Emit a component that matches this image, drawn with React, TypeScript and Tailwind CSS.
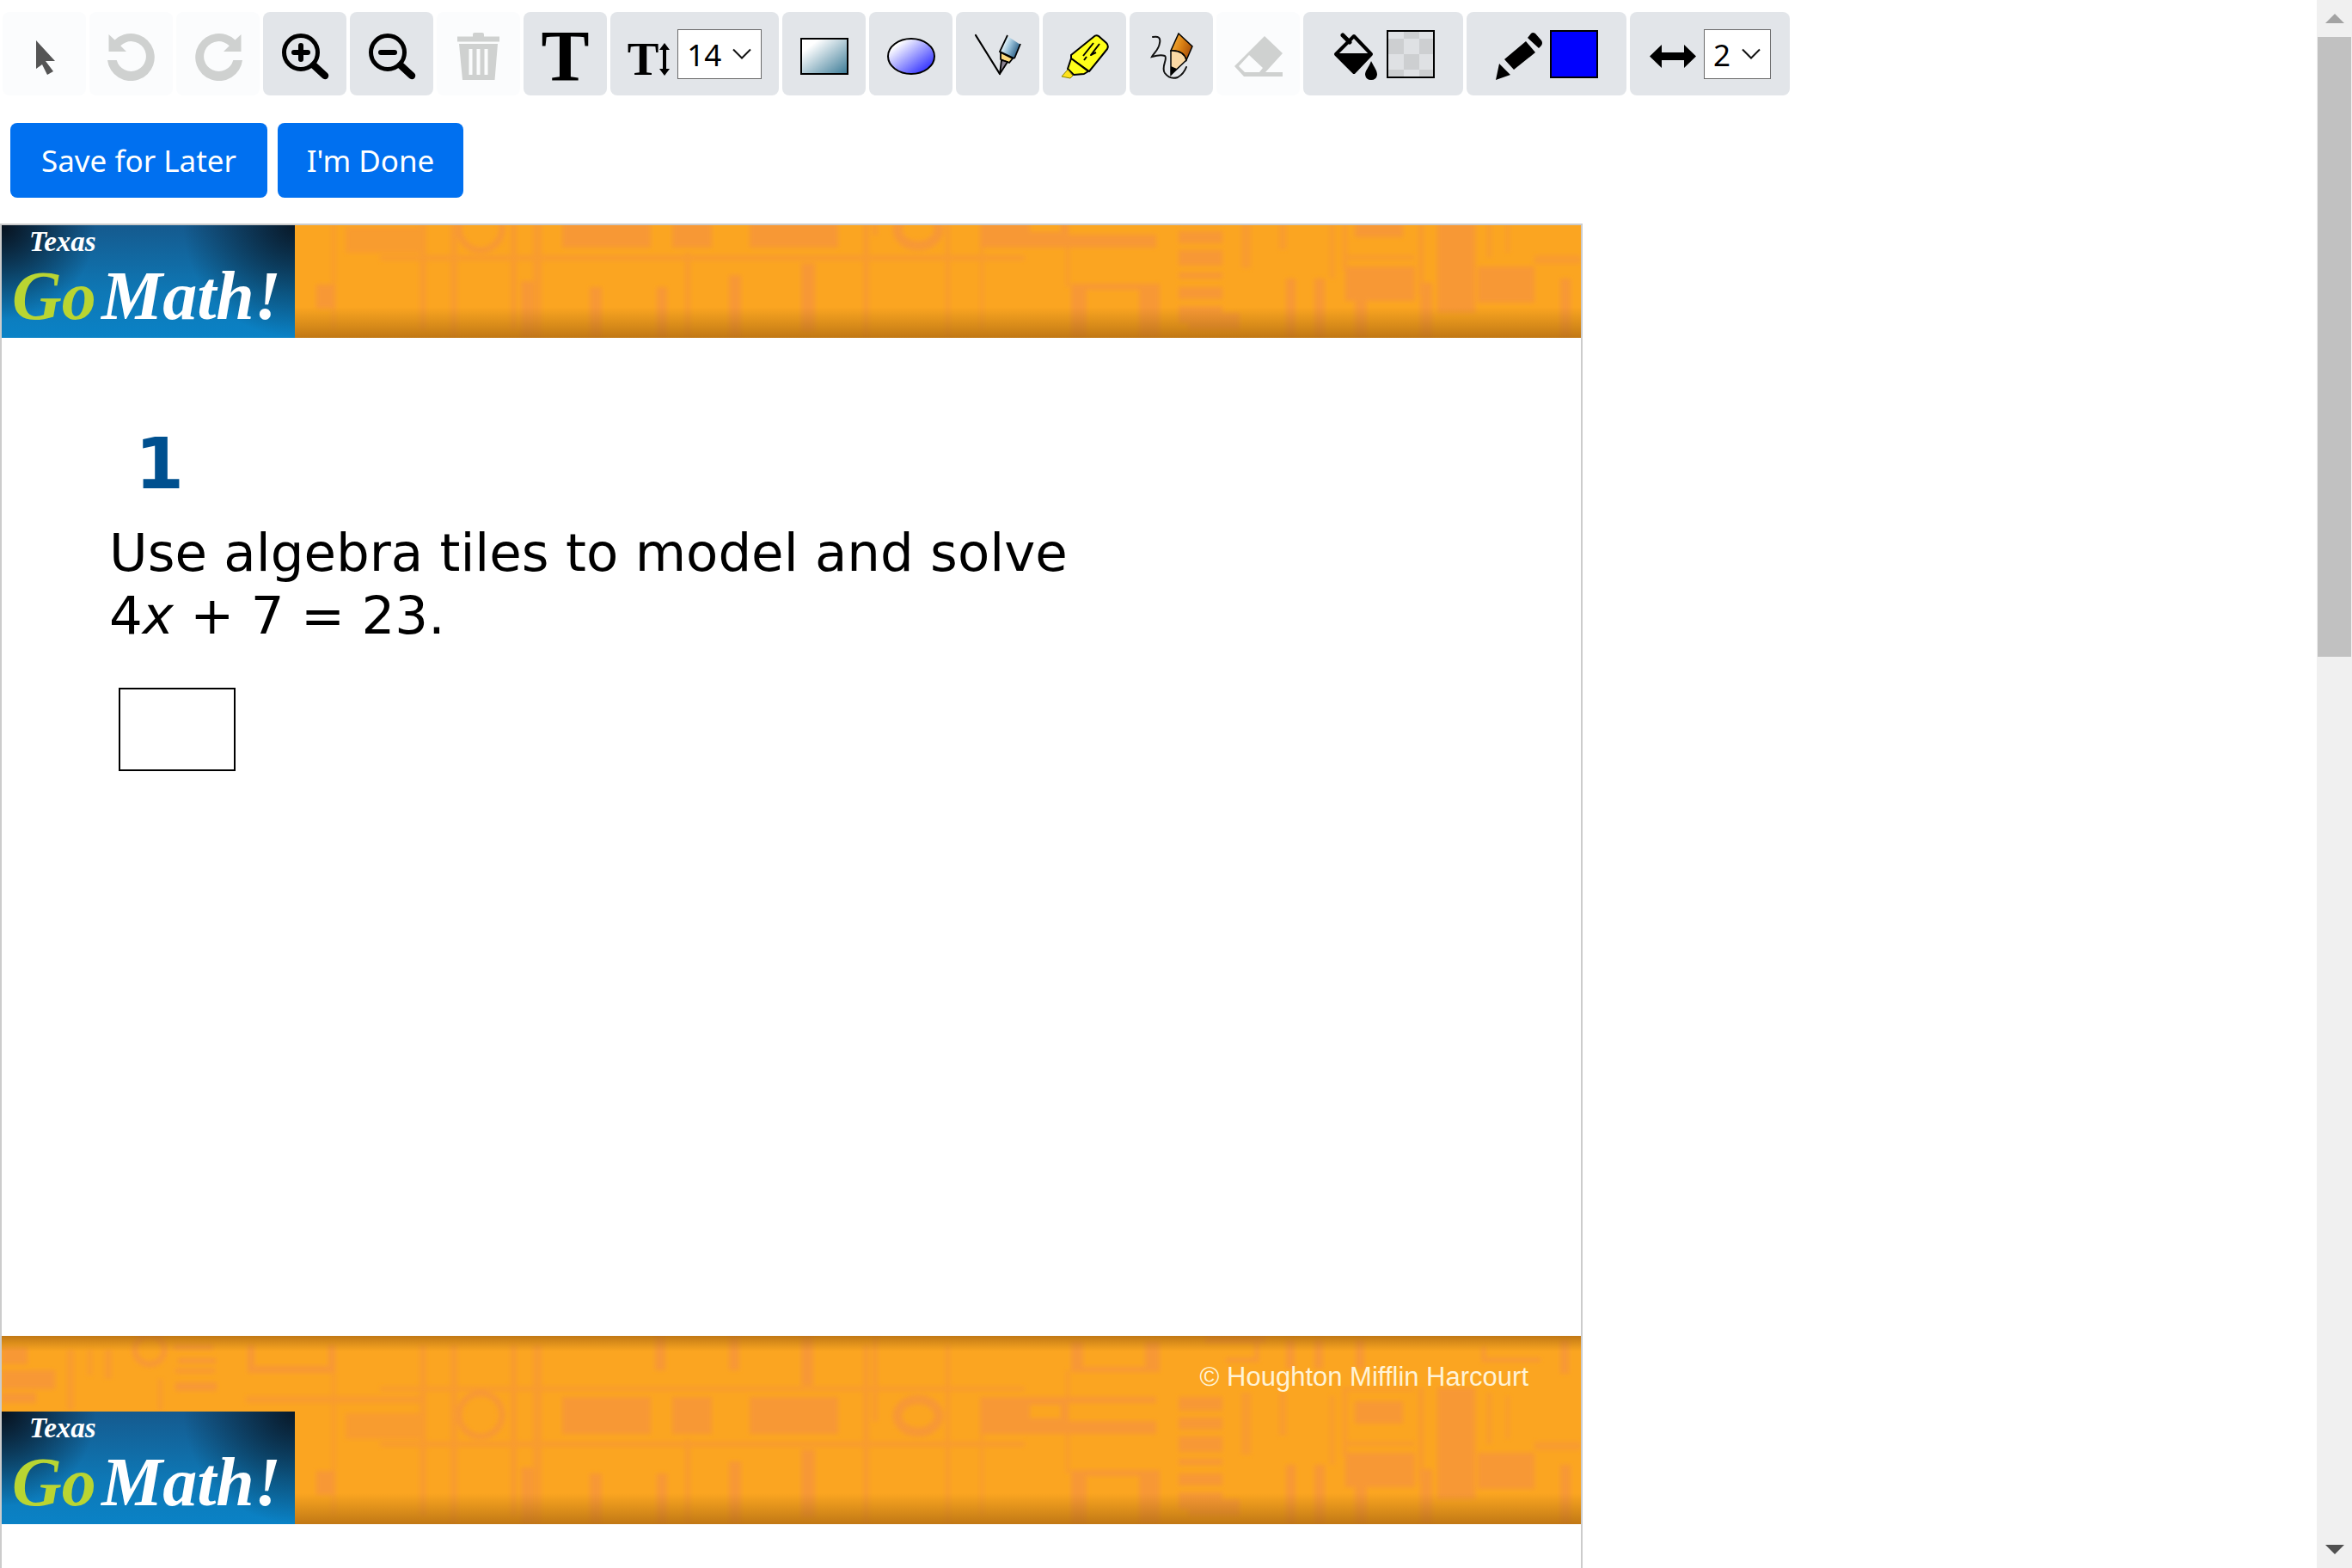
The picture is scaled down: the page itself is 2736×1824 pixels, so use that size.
import { useState } from "react";
import type { ReactNode } from "react";
import clsx from "clsx";

const FONT_SIZES = ["10", "12", "14", "18", "24"];
const LINE_WIDTHS = ["1", "2", "4", "8"];

function Icon({ children, className }: { children: ReactNode; className?: string }) {
  return (
    <svg viewBox="0 0 56 56" className={clsx("mt-1.5 size-14 shrink-0", className)} aria-hidden="true">
      {children}
    </svg>
  );
}

function ToolButton({
  label,
  disabled,
  children,
}: {
  label: string;
  disabled?: boolean;
  children: ReactNode;
}) {
  return (
    <button
      type="button"
      aria-label={label}
      disabled={disabled}
      className={clsx(
        "flex h-[97px] w-[97px] shrink-0 items-center justify-center rounded-lg",
        disabled ? "bg-[#fbfcfd]" : "bg-[#e2e5e9]"
      )}
    >
      {children}
    </button>
  );
}

function ToolSelect({
  label,
  options,
  initial,
  className,
}: {
  label: string;
  options: string[];
  initial: string;
  className: string;
}) {
  const [value, setValue] = useState(initial);
  return (
    <div className={clsx("relative shrink-0", className)}>
      <select
        aria-label={label}
        value={value}
        onChange={(e) => setValue(e.target.value)}
        className="h-[58px] w-full appearance-none border border-[#6b6b6b] bg-white pt-0.5 pl-2.5 font-['Noto_Sans'] text-[35px] leading-[54px] text-black"
      >
        {options.map((o) => (
          <option key={o}>{o}</option>
        ))}
      </select>
      <svg
        viewBox="0 0 22 14"
        className="pointer-events-none absolute top-[22px] right-3 h-3.5 w-[22px]"
        aria-hidden="true"
      >
        <path d="M1 1.500L11 11.500L21 1.500" fill="none" stroke="#111" strokeWidth="2" />
      </svg>
    </div>
  );
}

function UndoShape() {
  return (
    <path
      d="M1.500 2L8.500 8.500A27.500 27.500 0 1 1 0 32H10.700A17.400 17.400 0 1 0 15.200 15.200L22 22H1.500Z"
      fill="#cfd1d0"
    />
  );
}

function Magnifier({ plus }: { plus?: boolean }) {
  return (
    <g fill="none" stroke="#000" strokeLinecap="round">
      <circle cx="23" cy="23" r="19.500" strokeWidth="5" />
      <path d="M38 38L51 50" strokeWidth="8.500" />
      <path d="M15 23H31" strokeWidth="6" />
      {plus && <path d="M23 15V31" strokeWidth="6" />}
    </g>
  );
}

function Toolbar() {
  return (
    <div role="toolbar" aria-label="Drawing tools" className="flex gap-1 pt-3.5 pl-[3px]">
      <ToolButton label="Select" disabled>
        <Icon>
          <path d="M18 9L40 33H29L38 45L31 49L25 37L18 42Z" fill="#555" />
        </Icon>
      </ToolButton>
      <ToolButton label="Undo" disabled>
        <Icon>
          <UndoShape />
        </Icon>
      </ToolButton>
      <ToolButton label="Redo" disabled>
        <Icon className="-scale-x-100">
          <UndoShape />
        </Icon>
      </ToolButton>
      <ToolButton label="Zoom in">
        <Icon>
          <Magnifier plus />
        </Icon>
      </ToolButton>
      <ToolButton label="Zoom out">
        <Icon>
          <Magnifier />
        </Icon>
      </ToolButton>
      <ToolButton label="Delete" disabled>
        <Icon>
          <path
            d="M21 4.500V2Q21 0 23 0H32Q34 0 34 2V4.500H52V10.500H3V4.500ZM5 13H50L46.500 55H9ZM16.500 19V49H20.500V19ZM25.500 19V49H29.500V19ZM34.500 19V49H38.500V19Z"
            fill="#cfd1d0"
            fillRule="evenodd"
          />
        </Icon>
      </ToolButton>
      <ToolButton label="Text">
        <span className="mt-1.5 font-['Liberation_Serif'] text-[84px] leading-none font-bold">T</span>
      </ToolButton>

      <div className="flex h-[97px] w-[196px] shrink-0 items-center justify-center rounded-lg bg-[#e2e5e9]">
        <span className="mt-3 font-['Liberation_Serif'] text-[55px] leading-none font-bold">T</span>
        <svg viewBox="0 0 14 38" className="mt-3 mr-2 h-[38px] w-3.5" aria-hidden="true">
          <path d="M7 0L13 8H9V30H13L7 38L1 30H5V8H1Z" fill="#000" />
        </svg>
        <ToolSelect label="Font size" options={FONT_SIZES} initial="14" className="w-[98px]" />
      </div>

      <ToolButton label="Rectangle">
        <Icon>
          <defs>
            <linearGradient id="rectFill" x1="0" y1="0" x2="1" y2="1">
              <stop offset="0.2" stopColor="#fff" />
              <stop offset="1" stopColor="#3a7a96" />
            </linearGradient>
          </defs>
          <rect x="1" y="7" width="54" height="41" fill="url(#rectFill)" stroke="#000" strokeWidth="2" />
        </Icon>
      </ToolButton>
      <ToolButton label="Ellipse">
        <Icon>
          <defs>
            <linearGradient id="ellipseFill" x1="0.1" y1="0.1" x2="0.9" y2="0.9">
              <stop offset="0.1" stopColor="#fff" />
              <stop offset="1" stopColor="#2a2aff" />
            </linearGradient>
          </defs>
          <ellipse cx="28" cy="27.500" rx="27" ry="20.500" fill="url(#ellipseFill)" stroke="#000" strokeWidth="2" />
        </Icon>
      </ToolButton>
      <ToolButton label="Line">
        <Icon>
          <defs>
            <linearGradient id="penBody" x1="0.1" y1="0.3" x2="0.9" y2="0.7">
              <stop offset="0.1" stopColor="#e8f6fc" />
              <stop offset="0.500" stopColor="#8fb9d3" />
              <stop offset="1" stopColor="#2c5f85" />
            </linearGradient>
          </defs>
          <path d="M39 4L54 14L47 30L30 22Z" fill="url(#penBody)" />
          <path d="M39 3L30 22L47 30M54 13L47 30" fill="none" stroke="#000" strokeWidth="1.800" />
          <path d="M31 23L45 30L41 35L31 31Z" fill="#fbd97c" stroke="#000" strokeWidth="1.800" />
          <path d="M32 32L39 34L30 48Z" fill="#8b8291" stroke="#000" strokeWidth="1.800" />
          <path d="M2 3L30 48" fill="none" stroke="#000" strokeWidth="2.200" strokeLinecap="round" />
        </Icon>
      </ToolButton>
      <ToolButton label="Highlighter">
        <Icon>
          <g stroke="#000" strokeWidth="2" strokeLinejoin="round">
            <path d="M38 5Q41 2 44 4L53 12Q56 15 54 19L33 45L12 30V26Z" fill="#ffff1a" />
            <path d="M12 30L32 45L27 48L15 49L8 42Z" fill="#ffff1a" />
            <path d="M8 43L14 50L11 53L1 51Z" fill="#ffe21a" stroke="#8a8400" strokeWidth="1" />
            <path d="M38 12L26 27M45 13L35 26L41 23M30 28L27 32" fill="none" />
          </g>
        </Icon>
      </ToolButton>
      <ToolButton label="Freehand">
        <Icon>
          <defs>
            <linearGradient id="pencilBody" x1="0" y1="0.3" x2="1" y2="0.7">
              <stop offset="0" stopColor="#f5b13c" />
              <stop offset="0.500" stopColor="#d97f13" />
              <stop offset="1" stopColor="#a34a08" />
            </linearGradient>
          </defs>
          <path d="M36 1L52 16L45 32Q42 20 27 21Z" fill="url(#pencilBody)" stroke="#000" strokeWidth="1.500" />
          <path d="M27 21Q42 20 45 32L27 49Z" fill="#fbd9a5" stroke="#000" strokeWidth="1.500" />
          <path d="M27 39L34 42L27 50Z" fill="#000" />
          <path
            d="M6 5Q16 3 14 12C13 20 7 24 5 28Q15 25 20 27C24 30 15 40 20 47Q26 55 35 52Q42 48 45 40"
            fill="none"
            stroke="#111"
            strokeWidth="2"
            strokeLinecap="round"
          />
        </Icon>
      </ToolButton>
      <ToolButton label="Eraser" disabled>
        <Icon>
          <path
            d="M35 4L56 24L36 46H56V51H11L0 39ZM17 26L5 39L12 46H29L33 41Z"
            fill="#cfd1d0"
            fillRule="evenodd"
          />
        </Icon>
      </ToolButton>

      <button
        type="button"
        aria-label="Fill color"
        className="flex h-[97px] w-[186px] shrink-0 items-center justify-center gap-2 rounded-lg bg-[#e2e5e9]"
      >
        <Icon>
          <path d="M26 4L46 25L26 46L5 25Z" fill="none" stroke="#000" strokeWidth="4" strokeLinejoin="round" />
          <path d="M5 25H46L26 46Z" stroke="#000" strokeWidth="2" strokeLinejoin="round" />
          <path d="M13 3L21 11" stroke="#000" strokeWidth="5" strokeLinecap="round" />
          <path d="M46 33C50 41 53 44 53 49Q52 55 46 55Q40 55 39 49C39 44 43 41 46 33Z" />
        </Icon>
        <svg viewBox="0 0 56 56" className="size-14" aria-hidden="true">
          <rect x="1" y="1" width="54" height="54" fill="#dfe1e4" stroke="#000" strokeWidth="2" />
          <path d="M20 2H38V10H20ZM2 10H20V28H2ZM38 10H54V28H38ZM20 28H38V46H20ZM2 46H20V54H2ZM38 46H54V54H38Z" fill="#cdcfd1" />
        </svg>
      </button>
      <button
        type="button"
        aria-label="Line color"
        className="flex h-[97px] w-[186px] shrink-0 items-center justify-center gap-2 rounded-lg bg-[#e2e5e9]"
      >
        <Icon>
          <path d="M36 10L47 23L22 43L11 31ZM38 6L42 1Q44 -1 47 1L54 9Q56 12 54 15L51 18ZM5 36L18 49L1 55Z" />
        </Icon>
        <span className="size-14 border-2 border-black bg-[#0000ff]" />
      </button>
      <div className="flex h-[97px] w-[186px] shrink-0 items-center justify-center gap-2 rounded-lg bg-[#e2e5e9]">
        <Icon>
          <path d="M1 27.500L15 14V23H41V14L55 27.500L41 41V32H15V41Z" />
        </Icon>
        <ToolSelect label="Line width" options={LINE_WIDTHS} initial="2" className="w-[78px]" />
      </div>
    </div>
  );
}

// Circuit-like texture shared by the header and footer bands, anchored to the bottom edge.
function BandTexture({ id, topShade }: { id: string; topShade?: boolean }) {
  return (
    <svg
      viewBox="0 0 1837 219"
      preserveAspectRatio="none"
      className="absolute bottom-0 left-0 h-[219px] w-full"
      aria-hidden="true"
    >
      <defs>
        <filter id={`${id}-soft`} x="0" y="0" width="1" height="1">
          <feGaussianBlur stdDeviation="2.500" />
        </filter>
        <linearGradient id={`${id}-low`} x1="0" y1="0" x2="0" y2="1">
          <stop offset="0" stopColor="#a86c10" stopOpacity="0" />
          <stop offset="1" stopColor="#a86410" stopOpacity="0.7" />
        </linearGradient>
        <linearGradient id={`${id}-high`} x1="0" y1="0" x2="0" y2="1">
          <stop offset="0" stopColor="#a86410" stopOpacity="0.7" />
          <stop offset="1" stopColor="#a86c10" stopOpacity="0" />
        </linearGradient>
      </defs>
      <rect width="1837" height="219" fill="#fba521" />
      <g filter={`url(#${id}-soft)`} opacity="0.900">
        <g fill="#f79739">
          <path d="M652 71h103v43h-103zM780 71h46v43h-46zM870 71h103v43h-103zM1138 71h102v43h-102zM1240 71h103v7h-103zM1240 99h103v15h-103z" />
          <path d="M1369 71h51v16h-51zM1369 95h51v14h-51zM1369 117h51v18h-51zM1369 143h51v7h-51zM1369 160h51v14h-51zM1369 182h51v20h-51z" />
          <path d="M1574 76h56v26h-56zM1563 136h81v40h-81zM1670 60h44v130h-44zM1717 136h66v42h-66z" />
          <path d="M0 13h30v20h-30zM0 40h62v22h-62zM0 66h40v12h-40zM200 10h46v6h-46zM205 26h44v6h-44zM202 38h46v5h-46zM202 54h48v10h-48z" />
          <path d="M1244 156h103v7h-103zM1244 163h18v56h-18zM1323 163h24v56h-24zM1244 6h14v36h-14zM1330 6h17v36h-17zM1244 36h103v6h-103z" />
          <path d="M366 157h22v28h-22zM604 153h14v66h-14zM684 160h14v59h-14zM1400 0h70v8h-70zM1380 190h60v20h-60z" />
          <path d="M760 0h12v40h-12zM846 0h12v40h-12zM930 0h14v58h-14zM762 160h12v59h-12zM846 146h14v73h-14zM930 132h16v80h-16z" />
          <path d="M1494 4h10v34h-10zM1527 4h10v34h-10zM1575 4h10v34h-10zM1494 150h11v69h-11zM1527 150h12v69h-12zM1574 176h14v43h-14zM1650 155h14v64h-14zM1813 150h12v69h-12zM1813 4h10v40h-10z" />
        </g>
        <g fill="#f79739" opacity="0.700">
          <path d="M440 59h750v5h-750zM440 123h750v6h-750zM284 70h210v8h-210zM400 90h90v30h-90zM1783 123h54v10h-54zM1563 123h80v5h-80zM1563 60h80v4h-80z" />
          <path d="M486 10h8v200h-8zM522 10h8v209h-8zM592 10h7v200h-7zM618 10h10v209h-10zM384 20h4v190h-4zM795 120h6v99h-6zM1002 10h7v209h-7zM1013 0h6v100h-6zM1098 10h5v209h-5zM1138 110h4v100h-4zM1238 40h4v120h-4z" />
          <path d="M1442 66h11v72h-11zM1486 66h8v50h-8zM1545 70h5v80h-5zM1560 60h5v80h-5zM1648 60h6v110h-6zM1728 66h5v60h-5zM1750 70h4v50h-4zM76 16h8v70h-8zM120 16h8v34h-8zM182 50h5v37h-5zM100 16h5v30h-5z" />
        </g>
        <g fill="none" stroke="#f79739" strokeWidth="7">
          <circle cx="557" cy="92" r="25" />
          <ellipse cx="1066" cy="93" rx="24" ry="19" strokeWidth="11" />
          <circle cx="172" cy="16" r="17" />
          <path d="M290 10V39H384V10" strokeWidth="8" />
          <path d="M1460 8V28H1424M1724 12V28H1790" strokeWidth="5" />
        </g>
        <path d="M1196 80h36v16h-36z" fill="#fba521" />
      </g>
      <rect y="183" width="1837" height="36" fill={`url(#${id}-low)`} />
      {topShade && <rect width="1837" height="18" fill={`url(#${id}-high)`} />}
    </svg>
  );
}

function GoMathLogo({ id }: { id: string }) {
  return (
    <svg viewBox="0 0 341 131" className="relative h-[131px] w-[341px] shrink-0" role="img" aria-label="Texas Go Math!">
      <defs>
        <linearGradient id={`${id}-base`} x1="0" y1="0" x2="0" y2="1">
          <stop offset="0" stopColor="#155a8e" />
          <stop offset="0.600" stopColor="#0e78b6" />
          <stop offset="1" stopColor="#0a82c6" />
        </linearGradient>
        <radialGradient id={`${id}-left`} gradientUnits="userSpaceOnUse" cx="0" cy="0" r="110">
          <stop offset="0" stopColor="#07121e" />
          <stop offset="1" stopColor="#07121e" stopOpacity="0" />
        </radialGradient>
        <radialGradient id={`${id}-right`} gradientUnits="userSpaceOnUse" cx="341" cy="0" r="130">
          <stop offset="0" stopColor="#07121e" stopOpacity="0.900" />
          <stop offset="1" stopColor="#07121e" stopOpacity="0" />
        </radialGradient>
      </defs>
      <rect width="341" height="131" fill={`url(#${id}-base)`} />
      <rect width="341" height="131" fill={`url(#${id}-left)`} />
      <rect width="341" height="131" fill={`url(#${id}-right)`} />
      <g fontFamily="'Liberation Serif', serif" fontWeight="700" fontStyle="italic">
        <text x="32" y="30" fontSize="33" fill="#fff">
          Texas
        </text>
        <text x="12" y="109" fontSize="80" fill="#b9d532">
          Go
        </text>
        <text x="116" y="109" fontSize="80" fill="#fff">
          Math!
        </text>
      </g>
    </svg>
  );
}

function Worksheet() {
  return (
    <section className="flex w-[1841px] max-w-full flex-1 flex-col border-2 border-b-0 border-[#ccc]">
      <header className="relative flex h-[131px] shrink-0 overflow-hidden">
        <BandTexture id="header" />
        <GoMathLogo id="headerLogo" />
      </header>

      <div className="min-h-[1161px] shrink-0 pt-[99px] pl-[125px] font-['DejaVu_Sans'] text-black">
        <h1 className="pl-[30px] text-[82px] leading-[96px] font-bold text-[#00508f]">1</h1>
        <p className="pt-[18px] text-[61px] leading-[73px]">
          Use algebra tiles to model and solve
          <br />4<i>x</i> + 7 = 23.
        </p>
        <input
          type="text"
          aria-label="Answer"
          className="mt-12 ml-[11px] block h-[97px] w-[136px] border-2 border-black bg-white px-2 text-[40px]"
        />
      </div>

      <footer className="relative flex h-[219px] shrink-0 items-end justify-between overflow-hidden">
        <BandTexture id="footer" topShade />
        <GoMathLogo id="footerLogo" />
        <small className="relative self-start pt-[30px] pr-[61px] font-['Liberation_Sans'] text-[31px] leading-9 text-[#fff3d6]">
          © Houghton Mifflin Harcourt
        </small>
      </footer>
    </section>
  );
}

function Scrollbar() {
  return (
    <div className="flex w-[41px] shrink-0 flex-col bg-[#f0f0f0] px-px">
      <button type="button" aria-label="Scroll up" className="flex h-[43px] items-center justify-center">
        <svg viewBox="0 0 22 11" className="h-[11px] w-[22px]" aria-hidden="true">
          <path d="M11 0L22 11H0Z" fill="#a3a3a3" />
        </svg>
      </button>
      <div className="flex flex-1 flex-col">
        <div className="flex-[83] bg-[#c1c1c1]" />
        <div className="flex-[117]" />
      </div>
      <button type="button" aria-label="Scroll down" className="flex h-[43px] items-center justify-center">
        <svg viewBox="0 0 22 11" className="h-[11px] w-[22px]" aria-hidden="true">
          <path d="M0 0H22L11 11Z" fill="#505050" />
        </svg>
      </button>
    </div>
  );
}

export default function App() {
  return (
    <div className="flex h-screen overflow-hidden bg-white">
      <main className="flex min-w-0 flex-1 flex-col overflow-hidden">
        <Toolbar />
        <div className="flex gap-1.5 px-3 pt-8 pb-[30px] font-['Noto_Sans'] text-[35px] text-white">
          <button type="button" className="mr-1.5 h-[87px] w-[299px] rounded-lg bg-[#0070f0] pt-0.5">
            Save for Later
          </button>
          <button type="button" className="h-[87px] w-[216px] rounded-lg bg-[#0070f0] pt-0.5">
            I'm Done
          </button>
        </div>
        <Worksheet />
      </main>
      <Scrollbar />
    </div>
  );
}
